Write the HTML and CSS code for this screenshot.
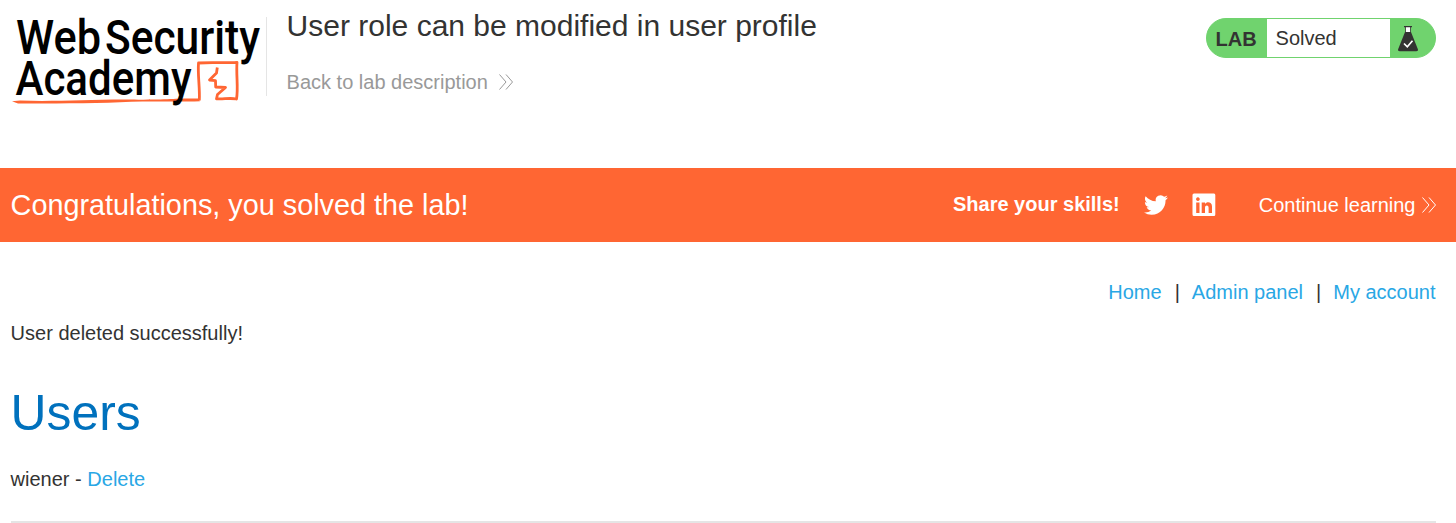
FILE: index.html
```html
<!DOCTYPE html>
<html lang="en">
<head>
<meta charset="utf-8">
<title>User role can be modified in user profile</title>
<link rel="stylesheet" href="styles.css">
</head>
<body>
<header class="lab-header">
  <svg class="logo" width="266" height="120" viewBox="0 0 266 120" role="img" aria-label="Web Security Academy">
    <g class="logo-text">
      <text x="16" y="54" textLength="85" lengthAdjust="spacingAndGlyphs">Web</text>
      <text x="105" y="54" textLength="155" lengthAdjust="spacingAndGlyphs">Security</text>
    </g>
    <path class="logo-fill" d="M12 101.300 L20 100.600 C55 102 90 99.300 130 99.600 S180 98 198 98.600 L200 101.300 C180 102 150 101 120 102.300 S50 103.500 18 103.600z"/>
    <path class="logo-line" d="M199.300 100.500 C200 87 197.600 76 198.500 63 C212 62 224 63.300 237 62.300 C236 75 238.500 88 236.500 99 C229 97.500 223 99.600 216.500 98.800 L217.500 94.500 L225.500 87.500 L215.700 87 L215.500 80.700 L209.500 80 L216.500 73 L217.300 67.500"/>
    <g class="logo-text">
      <text x="15.500" y="95" textLength="176" lengthAdjust="spacingAndGlyphs">Academy</text>
    </g>
  </svg>
  <div class="title-block">
    <h2 class="lab-title">User role can be modified in user profile</h2>
    <a class="back-link">Back to lab description
      <svg width="16" height="18" viewBox="0 0 16 18"><path class="chevrons" d="M1.500 1.500 8 9 1.500 16.500M8 1.500 14.500 9 8 16.500"/></svg>
    </a>
  </div>
  <div class="status">
    <span class="status-tag">LAB</span>
    <span class="status-text">Solved</span>
    <span class="status-icon">
      <svg width="20" height="26" viewBox="0 0 20 26">
        <path fill="#fff" d="M7.500 1h5v5.500h-5z"/>
        <path fill="#333332" d="M6 0h8v1.300h-1V6L19.500 22.300Q21 25.300 18 25.300H2Q-1 25.300.5 22.300L7 6V1.300H6zM7.800 1.300V6h4.400V1.300z"/>
        <path class="tick" d="M6 17.500 9.300 20.800 14.500 14.800"/>
      </svg>
    </span>
  </div>
</header>
<section class="banner">
  <h4 class="banner-title">Congratulations, you solved the lab!</h4>
  <span class="share">Share your skills!</span>
  <svg class="twitter" width="24" height="24" viewBox="0 0 24 24"><path fill="#fff" d="M23.950 4.570a10 10 0 0 1-2.820.77 4.960 4.960 0 0 0 2.160-2.720c-.95.55-2 .95-3.130 1.180a4.920 4.920 0 0 0-8.380 4.480C7.690 8.100 4.070 6.130 1.640 3.160a4.820 4.820 0 0 0-.67 2.480c0 1.710.87 3.210 2.190 4.100a4.900 4.900 0 0 1-2.230-.62v.06a4.920 4.920 0 0 0 3.950 4.830 5 5 0 0 1-2.210.08 4.940 4.940 0 0 0 4.600 3.420A9.870 9.870 0 0 1 0 19.540a13.990 13.990 0 0 0 7.550 2.210c9.050 0 14-7.500 14-13.980 0-.21 0-.42-.02-.63a9.940 9.940 0 0 0 2.460-2.550z"/></svg>
  <svg class="linkedin" width="24" height="24" viewBox="0 0 24 24"><path fill="#fff" fill-rule="evenodd" d="M2 .5h20Q23.300.5 23.300 2v19.500Q23.300 23 22 23H2Q.5 23 .5 21.500V2Q.5.500 2 .5zM4.200 9.500V20H7.500V9.500zM5.900 4.300a1.850 1.850 0 1 0 .01 0zM9.700 9.500V20H13V14.800c0-3.200 3.600-3.200 3.600 0V20H20V13.500c0-5-5.300-5.300-7-2.600V9.500z"/></svg>
  <a class="continue">Continue learning
    <svg width="16" height="18" viewBox="0 0 16 18"><path class="chevrons" d="M1.500 1.500 8 9 1.500 16.500M8 1.500 14.500 9 8 16.500"/></svg>
  </a>
</section>
<main class="content">
  <nav class="nav"><a>Home</a><span>|</span><a>Admin panel</a><span>|</span><a>My account</a></nav>
  <p class="message">User deleted successfully!</p>
  <h1 class="heading">Users</h1>
  <div class="user-row"><span>wiener - </span><a>Delete</a></div>
  <hr class="rule">
</main>
</body>
</html>
```
FILE: styles.css
```css
* { box-sizing: border-box; }
body {
  margin: 0;
  height: 523px;
  overflow: hidden;
  background: #fff;
  color: #333332;
  font: 20px/24px "Liberation Sans", Arial, sans-serif;
}
h1, h2, h4, p { margin: 0; font-weight: 400; }
svg { display: block; flex: none; }
.lab-header { display: flex; align-items: flex-start; height: 168px; padding-right: 20px; }
.logo { overflow: visible; }
.logo-text { font: 500 48px Roboto, sans-serif; fill: #000; }
.logo-fill { fill: #ff6633; }
.logo-line { fill: none; stroke: #ff6633; stroke-width: 2.800px; stroke-linejoin: round; }
.title-block {
  flex: 1;
  height: 79px;
  margin-top: 17px;
  padding-left: 19.600px;
  border-left: 1px solid #e5e5e5;
}
.lab-title { margin-top: -9px; font-size: 30px; line-height: 36px; }
.back-link { display: flex; align-items: center; gap: 10px; margin-top: 26px; color: #999; }
.chevrons { fill: none; stroke: currentColor; stroke-width: 1px; }
.status {
  display: flex;
  width: 230px;
  height: 40px;
  margin-top: 18px;
  border: 1px solid #70d36e;
  border-radius: 20px;
  background: #70d36e;
  line-height: 38px;
  overflow: hidden;
}
.status-tag { width: 60px; padding-left: 8.600px; font-weight: 700; line-height: 40px; }
.status-text { width: 123px; padding-left: 8.600px; background: #fff; }
.status-icon { padding: 7px 0 0 8px; }
.tick { fill: none; stroke: #fff; stroke-width: 1.700px; }
.banner {
  display: flex;
  align-items: center;
  height: 74px;
  padding: 0 19px 0 10.600px;
  background: #ff6633;
  color: #fff;
}
.banner-title { flex: 1; font-size: 28.800px; line-height: 36px; }
.share { margin: 0 24.500px 2px 0; font-weight: 700; }
.twitter { margin-right: 24px; }
.linkedin { margin-right: 42.500px; }
.continue { display: flex; align-items: center; gap: 5.500px; }
.content { padding: 38px 20px 0 11px; }
.nav { display: flex; justify-content: flex-end; margin-right: .5px; }
.nav span { margin: 0 12px 0 13px; }
.content a { color: #29a7e5; }
.message { margin: 17px 0 0 -.4px; }
.heading { margin: 38px 0 0 -.4px; color: #0071bd; font-size: 49.800px; line-height: 60px; }
.user-row { margin: 24px 0 0 -.4px; white-space: pre; }
.rule { margin: 30px 0 0; border: 0; border-top: 2px solid #e5e5e5; }
```
